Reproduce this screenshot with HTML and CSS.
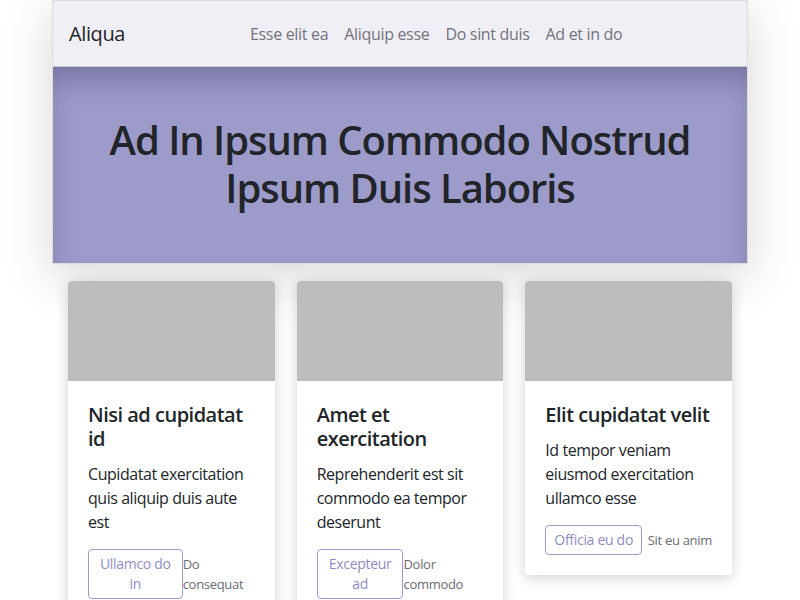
FILE: index.html
```html
<!DOCTYPE html>
<html lang="en">
<head>
<meta charset="utf-8">
<title>Aliqua</title>
<link rel="stylesheet" href="styles.css">
</head>
<body>
<div class="page">
  <header class="masthead">
    <nav class="navbar">
      <a class="brand" href="#">Aliqua</a>
      <ul class="nav">
        <li><a href="#">Esse elit ea</a></li>
        <li><a href="#">Aliquip esse</a></li>
        <li><a href="#">Do sint duis</a></li>
        <li><a href="#">Ad et in do</a></li>
      </ul>
    </nav>
    <section class="hero">
      <h1>Ad In Ipsum Commodo Nostrud Ipsum Duis Laboris</h1>
    </section>
  </header>
  <main class="cards">
    <article class="card">
      <div class="card-img"></div>
      <div class="card-body">
        <h2>Nisi ad cupidatat id</h2>
        <p>Cupidatat exercitation quis aliquip duis aute est</p>
        <div class="card-foot">
          <a class="btn" href="#">Ullamco do in</a>
          <span class="meta">Do consequat</span>
        </div>
      </div>
    </article>
    <article class="card">
      <div class="card-img"></div>
      <div class="card-body">
        <h2>Amet et exercitation</h2>
        <p>Reprehenderit est sit commodo ea tempor deserunt</p>
        <div class="card-foot">
          <a class="btn" href="#">Excepteur ad</a>
          <span class="meta">Dolor commodo</span>
        </div>
      </div>
    </article>
    <article class="card">
      <div class="card-img"></div>
      <div class="card-body">
        <h2>Elit cupidatat velit</h2>
        <p>Id tempor veniam eiusmod exercitation ullamco esse</p>
        <div class="card-foot">
          <a class="btn" href="#">Officia eu do</a>
          <span class="meta">Sit eu anim</span>
        </div>
      </div>
    </article>
  </main>
</div>
</body>
</html>
```
FILE: styles.css
```css
* { box-sizing: border-box; }
html, body { margin: 0; padding: 0; background: #fff; }
body {
  font-family: "Open Sans", "Noto Sans", "Liberation Sans", sans-serif;
  color: #212529;
}
.page {
  width: 696px;
  margin: 0 auto;
}
.masthead {
  border: 1px solid #dcdce2;
  box-shadow: 0 12px 48px rgba(0,0,0,0.16);
}
.navbar {
  display: flex;
  align-items: center;
  height: 66px;
  padding: 0 16px;
  background: #f0eff5;
  border-bottom: 1px solid #c9c9d0;
}
.brand {
  font-size: 20px;
  letter-spacing: -0.4px;
  color: #212529;
  text-decoration: none;
}
.nav {
  display: flex;
  list-style: none;
  margin: 0 0 0 117px;
  padding: 0;
}
.nav a {
  display: block;
  padding: 8px;
  font-size: 16px;
  letter-spacing: -0.32px;
  color: #74737c;
  text-decoration: none;
}
.hero {
  background: #9d9bc9;
  box-shadow: inset 0 18px 30px -8px rgba(40,36,80,0.36);
  padding: 49px 40px 51px;
  text-align: center;
}
.hero h1 {
  margin: 0;
  font-size: 40px;
  line-height: 48px;
  font-weight: 600;
  letter-spacing: -1.05px;
  color: #212529;
}
.cards {
  display: grid;
  grid-template-columns: repeat(3, 1fr);
  gap: 22px;
  padding: 17px 16px 20px;
  align-items: start;
}
.card {
  background: #fff;
  border-radius: 4px;
  overflow: hidden;
  box-shadow: 0 3px 14px rgba(0,0,0,0.18);
}
.card-img {
  height: 100px;
  background: #bdbdbd;
}
.card-body {
  padding: 22px 20px 20px;
}
.card h2 {
  margin: 0 0 11px;
  font-size: 20px;
  line-height: 24px;
  font-weight: 600;
  letter-spacing: -0.5px;
}
.card p {
  margin: 0 0 15px;
  font-size: 16px;
  line-height: 24px;
  letter-spacing: -0.45px;
}
.card-foot {
  display: flex;
  align-items: center;
  justify-content: space-between;
}
.btn {
  display: block;
  padding: 4px 8px;
  border: 1px solid #9d9bc9;
  border-radius: 4px;
  font-size: 14px;
  line-height: 20px;
  letter-spacing: -0.3px;
  color: #8f8cc4;
  text-align: center;
  text-decoration: none;
}
.meta {
  font-size: 13px;
  line-height: 20px;
  letter-spacing: -0.3px;
  color: #6c6b73;
}
```
